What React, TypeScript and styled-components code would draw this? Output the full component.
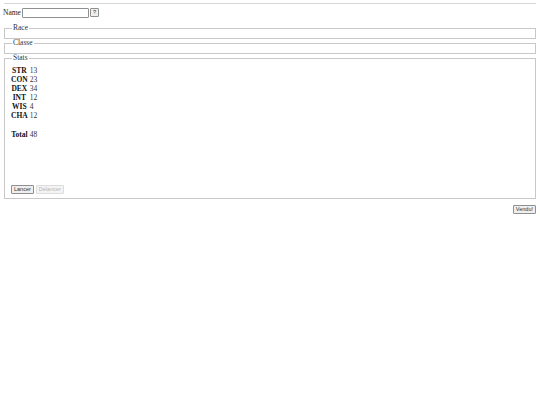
import React, { useState } from "react";
import styled, { createGlobalStyle } from "styled-components";

const GlobalStyle = createGlobalStyle`
  body {
    margin: 0;
    padding: 3px 4px;
    background: #fff;
    color: #1a1a1a;
    font-family: "Liberation Serif", "Times New Roman", serif;
    font-size: 7.5px;
  }
`;

const Rule = styled.hr`
  margin: 0 0 3px 0;
  border: none;
  border-top: 1px solid #d6d6d6;
`;

const NameRow = styled.div`
  display: flex;
  align-items: center;
  gap: 1px;
  height: 11px;
  margin-left: -1px;
  margin-bottom: 6px;
`;

const TextInput = styled.input`
  width: 63px;
  height: 8px;
  padding: 0 1px;
  border: 1px solid #8f8f8f;
  border-radius: 1px;
  font-size: 7px;
  outline: none;
`;

const Button = styled.button<{ $disabled?: boolean }>`
  font-family: "Liberation Sans", Arial, sans-serif;
  font-size: 5.5px;
  height: 9px;
  padding: 0 2px;
  line-height: 7px;
  background: ${(p) => (p.$disabled ? "#f4f4f4" : "#efefef")};
  color: ${(p) => (p.$disabled ? "#b5b5b5" : "#333")};
  border: 1px solid ${(p) => (p.$disabled ? "#dcdcdc" : "#8f8f8f")};
  border-radius: 1px;
`;

const Box = styled.fieldset<{ $height: number }>`
  margin: 0;
  padding: 0 6px;
  border: 1px solid #c8c8c8;
  height: ${(p) => p.$height}px;
  box-sizing: border-box;
  display: flex;
  flex-direction: column;
  align-items: flex-start;
`;

const Legend = styled.legend`
  padding: 0 1px;
  margin-left: 1px;
  font-size: 7.5px;
  line-height: 8px;
  color: #333;
`;

const StatsTable = styled.table`
  border-collapse: collapse;
  margin-top: 4px;
  td,
  th {
    padding: 0;
    height: 9px;
    line-height: 9px;
  }
  th {
    text-align: center;
    font-weight: bold;
    padding-right: 2px;
    color: #111;
  }
  td {
    text-align: left;
    color: #333;
  }
`;

const Spacer = styled.tr`
  height: 10px;
`;

const Actions = styled.div`
  margin-top: auto;
  margin-bottom: 4px;
  display: flex;
  gap: 2px;
`;

const Footer = styled.div`
  display: flex;
  justify-content: flex-end;
  margin-top: 6px;
`;

const stats: [string, number][] = [
  ["STR", 13],
  ["CON", 23],
  ["DEX", 34],
  ["INT", 12],
  ["WIS", 4],
  ["CHA", 12],
];

export default function App() {
  const [name, setName] = useState("");
  const total = stats.reduce((sum, [, v]) => sum + v, 0) - 50;

  return (
    <>
      <GlobalStyle />
      <Rule />
      <NameRow>
        <span>Name</span>
        <TextInput value={name} onChange={(e) => setName(e.target.value)} />
        <Button>?</Button>
      </NameRow>
      <Box $height={15}>
        <Legend>Race</Legend>
      </Box>
      <Box $height={15}>
        <Legend>Classe</Legend>
      </Box>
      <Box $height={145}>
        <Legend>Stats</Legend>
        <StatsTable>
          <tbody>
            {stats.map(([label, value]) => (
              <tr key={label}>
                <th>{label}</th>
                <td>{value}</td>
              </tr>
            ))}
            <Spacer />
            <tr>
              <th>Total</th>
              <td>{total}</td>
            </tr>
          </tbody>
        </StatsTable>
        <Actions>
          <Button>Lancer</Button>
          <Button $disabled disabled>
            Délancer
          </Button>
        </Actions>
      </Box>
      <Footer>
        <Button>Vendu!</Button>
      </Footer>
    </>
  );
}
